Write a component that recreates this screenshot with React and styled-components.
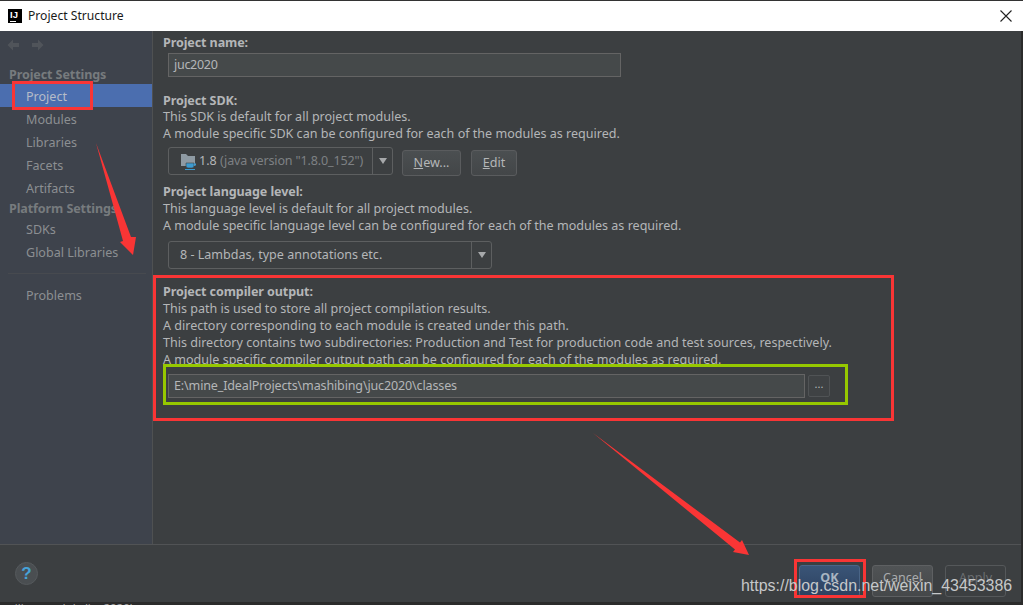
import React from 'react';
import styled, { createGlobalStyle } from 'styled-components';

const Global = createGlobalStyle`
  html, body { margin: 0; padding: 0; background: #2b2b2b; }
  * { box-sizing: border-box; }
`;
const FONT = `"Noto Sans", "Open Sans", sans-serif`;

const Page = styled.div`
  position: relative; width: 1023px; height: 605px; overflow: hidden;
  display: flex; flex-direction: column; font-family: ${FONT}; font-size: 12.55px; color: #b4b6b8;
  background: #2b2b2b;
`;
const TitleBar = styled.div`
  height: 31px; flex: none; background: #fff; border-top: 1px solid #333; display: flex; align-items: center;
  padding: 0 9px 1px 8px; color: #1a1a1a; gap: 6px;
`;
const Logo = styled.div`
  width: 14px; height: 14px; background: #000; color: #fff; font: bold 9.5px/11px "Liberation Sans", sans-serif;
  padding-left: 2px; position: relative;
  &::after { content: ''; position: absolute; left: 2px; bottom: 1px; width: 6px; height: 1px; background: #fff; }
`;
const TitleText = styled.span` flex: 1; font-size: 12.15px; `;
const CloseIcon = styled.svg` width: 12px; height: 12px; margin-right: 2px; `;
const Dialog = styled.div`
  flex: none; height: 571px; margin-right: 2px; display: flex; flex-direction: column; background: #3c3f41;
`;
const Body = styled.div` flex: none; height: 513px; display: flex; `;
const Sidebar = styled.div`
  width: 153px; flex: none; background: #3e434c; border-right: 1px solid #4f5152; padding-top: 7px; display: flex; flex-direction: column;
`;
const NavArrows = styled.div` display: flex; gap: 11px; padding-left: 6px; height: 14px; margin-bottom: 12px; `;
const NavHeader = styled.div`
  height: ${p => p.$h}px; line-height: ${p => p.$h + 2}px; padding-left: 9px; font-weight: 700; letter-spacing: -0.1px; color: #777b7e; white-space: nowrap;
`;
const NavItem = styled.div`
  height: 23px; line-height: 25px; padding-left: 26px; color: ${p => (p.$selected ? '#b6bcc8' : '#8c8f92')};
  background: ${p => (p.$selected ? '#4b6eaf' : 'transparent')};
`;
const NavSep = styled.div` height: 1px; background: #474a4f; margin: 10px 6px 9px 8px; `;
const Content = styled.div` flex: 1; padding: 3px 0 0 10px; line-height: 17px; `;
const Label = styled.div` font-weight: 700; letter-spacing: -0.1px; color: #b4b6b8; height: 17px; margin-top: ${p => p.$mt || 0}px; `;
const Hint = styled.div` height: 17px; white-space: nowrap; margin-top: ${p => p.$mt || 0}px; `;
const Field = styled.div`
  height: 24px; width: ${p => p.$w}px; margin: ${p => p.$mt || 0}px 0 0 5px; background: #45494a; border: 1px solid #646464;
  padding-left: 5px; line-height: 21px; color: #b4b6b8; white-space: nowrap; letter-spacing: ${p => p.$ls}px;
`;
const Row = styled.div` display: flex; align-items: ${p => p.$align || 'center'}; margin-top: ${p => p.$mt || 0}px; `;
const Combo = styled.div`
  display: flex; height: ${p => p.$h}px; width: ${p => p.$w}px; margin: ${p => p.$mt || 0}px 0 0 5px; background: #3c3f41;
  border: 1px solid #5d5f60; border-radius: 3px; line-height: 24px; flex: none;
`;
const ComboValue = styled.div` flex: 1; display: flex; align-items: center; gap: 2px; padding-left: 11px; white-space: nowrap; `;
const Dim = styled.span` color: #7e8184; letter-spacing: -0.15px; `;
const ComboArrow = styled.div`
  width: 20px; flex: none; border-left: 1px solid #5d5f60; display: flex; align-items: center; justify-content: center;
  &::after { content: ''; border-left: 4px solid transparent; border-right: 4px solid transparent; border-top: 6px solid #a6a8aa; }
`;
const Button = styled.div`
  height: 26px; width: ${p => p.$w}px; margin: 3px 0 0 ${p => p.$ml || 0}px; border: 1px solid #5a5c5e; border-radius: 3px;
  background: linear-gradient(#4b4f51, #434648); color: #b4b6b8; text-align: center; line-height: 23px; flex: none;
  u { text-decoration: underline; }
`;
const Browse = styled.div`
  width: 22px; height: 22px; margin-left: 3px; border: 1px solid #505355; border-radius: 2px; background: #3f4244;
  color: #b4b6b8; text-align: center; line-height: 16px; font-size: 11px; flex: none;
`;
const Footer = styled.div`
  flex: 1; border-top: 1px solid #515355; display: flex; align-items: flex-start; justify-content: space-between; padding: 17px 15px 0 15px;
`;
const Help = styled.div`
  width: 23px; height: 23px; border-radius: 50%; background: #4a4e51; border: 1px solid #55595c; color: #46a2d8;
  font: bold 17px/21px "Liberation Sans", sans-serif; text-align: center;
`;
const Actions = styled.div` display: flex; gap: 12px; margin-top: 3px; `;
const FooterButton = styled.div`
  width: 61px; height: 32px; border-radius: 3px; text-align: center; line-height: 24px; font-weight: ${p => (p.$primary ? 700 : 400)};
  border: 1px solid ${p => (p.$primary ? '#4a6587' : p.$disabled ? '#55585a' : '#5e6062')};
  background: ${p => (p.$primary ? 'linear-gradient(#3a5577, #2d4160)' : p.$disabled ? 'transparent' : 'linear-gradient(#505355, #45484a)')};
  color: ${p => (p.$primary ? '#a9b5c2' : p.$disabled ? '#6a6d70' : '#a9abad')};
`;
const ConsoleClip = styled.div` flex: none; height: 3px; overflow: hidden; `;
const Console = styled.div`
  color: #a9a9a9; font-size: 11.5px; line-height: 11px; white-space: nowrap; margin-left: -3px;
`;
const Box = styled.div`
  position: absolute; pointer-events: none; border: 3px solid ${p => p.$c};
  left: ${p => p.$x}px; top: ${p => p.$y}px; width: ${p => p.$w}px; height: ${p => p.$h}px;
`;
const Overlay = styled.svg` position: absolute; left: 0; top: 0; width: 1023px; height: 605px; pointer-events: none; `;
const Watermark = styled.div`
  position: absolute; left: 741px; top: 576px; font: 15.95px/20px "Liberation Sans", sans-serif; color: #c6c8c9; white-space: nowrap;
`;

const NAV1 = ['Modules', 'Libraries', 'Facets', 'Artifacts'];

const FolderIcon = () => (
  <svg width="17" height="17" viewBox="0 0 17 17">
    <path d="M1 1h5l2 2h7v10H1z" fill="#8e9aa3" />
    <path d="M6 10h8v3a2 2 0 0 1-2 2H8a2 2 0 0 1-2-2z" fill="#3d9bd0" stroke="#3c3f41" strokeWidth=".6" />
    <path d="M14 10.5h2v2h-2z" fill="#3d9bd0" />
    <path d="M5 16h10v1H5z" fill="#3d9bd0" />
  </svg>
);
const NavArrow = ({ flip }) => (
  <svg width="14" height="14" viewBox="0 0 14 14" style={flip ? { transform: 'scaleX(-1)' } : undefined}>
    <path d="M7 1.5 1.5 7 7 12.5V9h6V5H7z" fill="#50545a" />
  </svg>
);

export default function App() {
  return (
    <Page>
      <Global />
      <TitleBar>
        <Logo>IJ</Logo>
        <TitleText>Project Structure</TitleText>
        <CloseIcon viewBox="0 0 12 12"><path d="M.5.5l11 11M11.5.5l-11 11" stroke="#222" strokeWidth="1.1" /></CloseIcon>
      </TitleBar>
      <Dialog>
        <Body>
          <Sidebar>
            <NavArrows><NavArrow /><NavArrow flip /></NavArrows>
            <NavHeader $h={20}>Project Settings</NavHeader>
            <NavItem $selected>Project</NavItem>
            {NAV1.map(n => <NavItem key={n}>{n}</NavItem>)}
            <NavHeader $h={18}>Platform Settings</NavHeader>
            <NavItem>SDKs</NavItem>
            <NavItem>Global Libraries</NavItem>
            <NavSep />
            <NavItem>Problems</NavItem>
          </Sidebar>
          <Content>
            <Label>Project name:</Label>
            <Field $w={453} $mt={2} $ls={-0.3}>juc2020</Field>
            <Label $mt={15}>Project SDK:</Label>
            <Hint $mt={-1}>This SDK is default for all project modules.</Hint>
            <Hint>A module specific SDK can be configured for each of the modules as required.</Hint>
            <Row $mt={5} $align="flex-start">
              <Combo $w={225} $h={28}>
                <ComboValue><FolderIcon /><span>1.8 <Dim>(java version "1.8.0_152")</Dim></span></ComboValue>
                <ComboArrow />
              </Combo>
              <Button $w={59} $ml={9}><u>N</u>ew...</Button>
              <Button $w={46} $ml={10}><u>E</u>dit</Button>
            </Row>
            <Label $mt={7}>Project language level:</Label>
            <Hint>This language level is default for all project modules.</Hint>
            <Hint>A module specific language level can be configured for each of the modules as required.</Hint>
            <Combo $w={324} $h={28} $mt={7}>
              <ComboValue>8 - Lambdas, type annotations etc.</ComboValue>
              <ComboArrow />
            </Combo>
            <Label $mt={14}>Project compiler output:</Label>
            <Hint>This path is used to store all project compilation results.</Hint>
            <Hint>A directory corresponding to each module is created under this path.</Hint>
            <Hint>This directory contains two subdirectories: Production and Test for production code and test sources, respectively.</Hint>
            <Hint>A module specific compiler output path can be configured for each of the modules as required.</Hint>
            <Row $mt={6}>
              <Field $w={637} $ls={-0.15}>E:\mine_IdealProjects\mashibing\juc2020\classes</Field>
              <Browse>...</Browse>
            </Row>
          </Content>
        </Body>
        <Footer>
          <Help>?</Help>
          <Actions>
            <FooterButton $primary>OK</FooterButton>
            <FooterButton>Cancel</FooterButton>
            <FooterButton $disabled>Apply</FooterButton>
          </Actions>
        </Footer>
      </Dialog>
      <ConsoleClip><Console>mpiling module 'juc2020'</Console></ConsoleClip>
      <Box $c="#f93535" $x={12} $y={81} $w={81} $h={29} />
      <Box $c="#f93535" $x={153} $y={275} $w={741} $h={146} />
      <Box $c="#96c800" $x={163} $y={364} $w={685} $h={41} />
      <Box $c="#f93535" $x={794} $y={559} $w={72} $h={39} />
      <Overlay viewBox="0 0 1023 605">
        <polygon points="96,143 131,237 136,237 133,255 120,242 123,241" fill="#f93535" />
        <polygon points="593,433 740,542.5 742,540 749,555 733,552 735,549.5" fill="#f93535" />
      </Overlay>
      <Watermark>https://blog.csdn.net/weixin_43453386</Watermark>
    </Page>
  );
}
